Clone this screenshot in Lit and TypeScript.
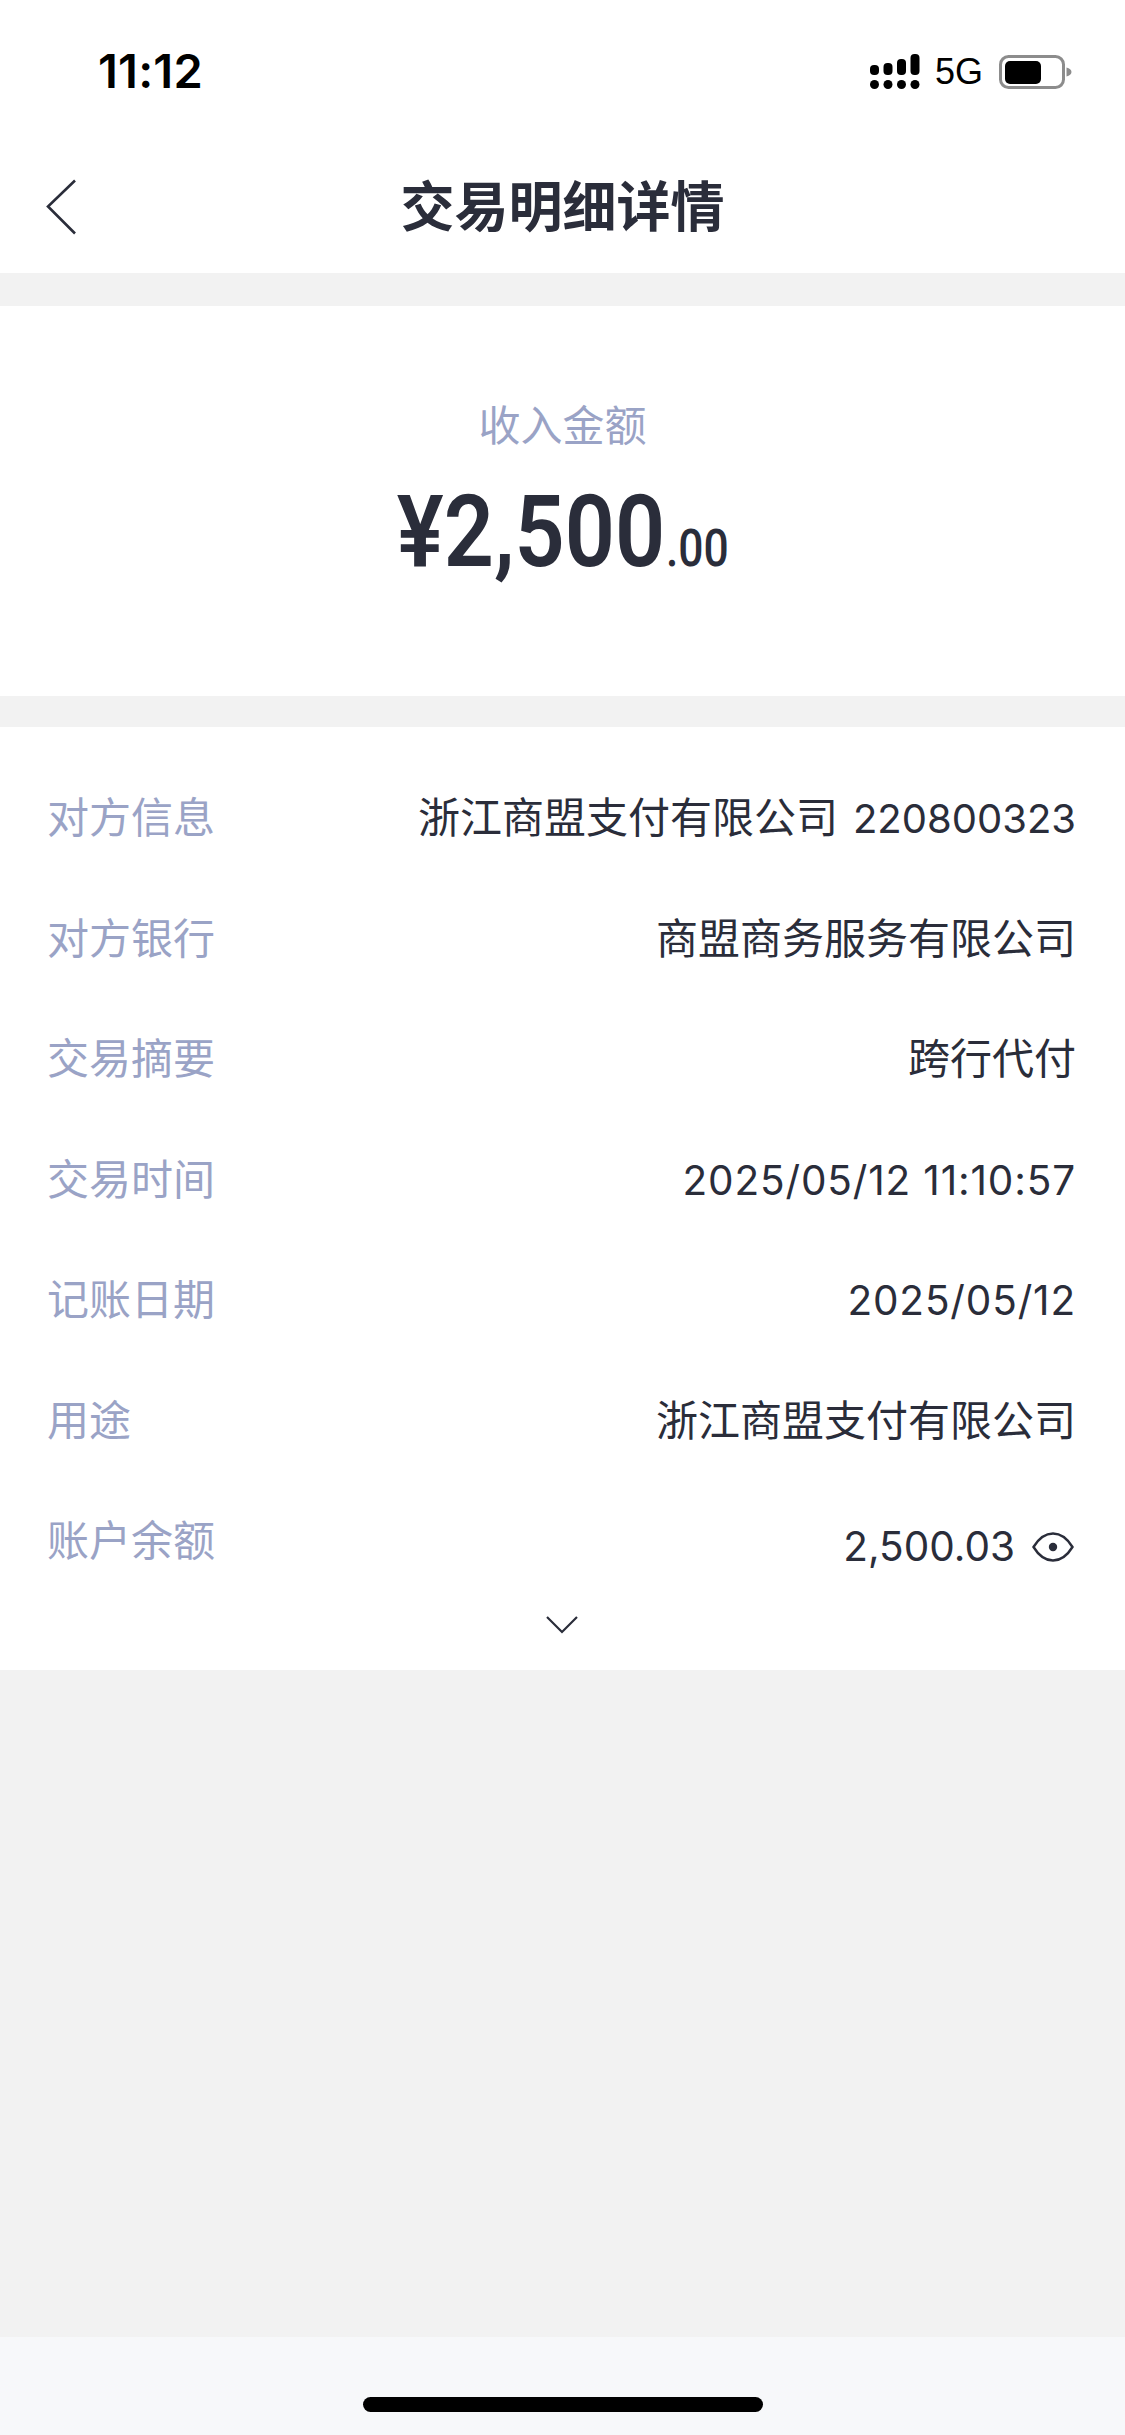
import { LitElement, html, css, svg } from "lit";
import { customElement } from "lit/decorators.js";

const ROWS: { label: string; value: unknown }[] = [
  { label: "对方信息", value: html`浙江商盟支付有限公司<span class="num gap">220800323</span>` },
  { label: "对方银行", value: "商盟商务服务有限公司" },
  { label: "交易摘要", value: "跨行代付" },
  { label: "交易时间", value: html`<span class="num date">2025/05/12 11:10:57</span>` },
  { label: "记账日期", value: html`<span class="num date">2025/05/12</span>` },
  { label: "用途", value: "浙江商盟支付有限公司" },
];

const signal = svg`<svg class="signal" width="50" height="36" viewBox="0 0 50 36" fill="#000">
  <rect x="0" y="11" width="9" height="10" rx="4"/><rect x="13.500" y="9" width="9" height="12" rx="4"/>
  <rect x="27" y="5" width="9" height="16" rx="4"/><rect x="40.500" y="0" width="9" height="21" rx="4"/>
  <circle cx="4.500" cy="30.500" r="4.500"/><circle cx="18" cy="30.500" r="4.500"/><circle cx="31.500" cy="30.500" r="4.500"/><circle cx="45" cy="30.500" r="4.500"/>
</svg>`;

const battery = svg`<svg class="battery" width="73" height="34" viewBox="0 0 73 34">
  <rect x="1.500" y="1.500" width="63" height="31" rx="8" fill="none" stroke="#8c8c8c" stroke-width="3"/>
  <rect x="6" y="6" width="36" height="23" rx="5" fill="#000"/>
  <path d="M67.500 12.500c3 .8 5 2.400 5 4.500s-2 3.700-5 4.500z" fill="#8c8c8c"/>
</svg>`;

@customElement("app-root")
export class AppRoot extends LitElement {
  static styles = css`
    :host {
      display: block;
      width: 1125px;
      height: 2435px;
      background: #f2f2f2;
      font-family: "Liberation Sans", "Noto Sans CJK SC", sans-serif;
      color: #2a2d3a;
      overflow: hidden;
    }
    .page { display: flex; flex-direction: column; height: 2435px; }
    .status {
      height: 130px; background: #fff; box-sizing: border-box;
      display: flex; justify-content: space-between; align-items: flex-start;
      padding: 48px 53px 0 98px;
    }
    .time { font: 600 47px/46px Inter, sans-serif; color: #000; letter-spacing: 0.2px; }
    .sys { display: flex; align-items: center; margin-top: 6px; }
    .sys .g5 { font: 400 36px/36px "Liberation Sans", sans-serif; color: #000; margin: 0 16px 0 15px; }
    .nav {
      height: 143px; background: #fff; position: relative;
      display: flex; align-items: center; justify-content: center;
    }
    .nav .back { position: absolute; left: 46px; top: 49px; }
    .title { font: 700 54px/70px "Noto Sans CJK SC", sans-serif; color: #2a2d3a; margin-top: 4px; }
    .hero {
      margin-top: 33px; height: 390px; background: #fff;
      display: flex; flex-direction: column; align-items: center; box-sizing: border-box; padding-top: 87px;
    }
    .hero .cap { font: 400 42px/60px "Noto Sans CJK SC", sans-serif; color: #9aa3c6; }
    .amount {
      margin-top: 21px; font-family: Roboto, sans-serif; color: #2a2d3a;
      display: flex; align-items: baseline; line-height: 116px;
      transform: scaleX(0.87);
    }
    .amount b { font-weight: 600; font-size: 101px; }
    .amount i { font-style: normal; font-weight: 500; font-size: 51px; margin-left: 1px; }
    .list {
      margin-top: 31px; height: 943px; background: #fff; box-sizing: border-box;
      padding: 28px 49px 0 47px; display: flex; flex-direction: column; align-items: stretch;
    }
    .row {
      height: 120.5px; flex: none; box-sizing: border-box;
      display: flex; justify-content: space-between; align-items: flex-start; padding-top: 30px;
    }
    .row .k { font: 400 42px/60px "Noto Sans CJK SC", sans-serif; color: #9aa3c6; }
    .row .v { font: 400 42px/60px "Noto Sans CJK SC", sans-serif; color: #2a2d3a; }
    .num { font-family: Inter, sans-serif; font-size: 40.5px; }
    .num.gap { margin-left: 15px; font-size: 40px; }
    .num.date { letter-spacing: 0.85px; }
    .v.bal { display: flex; align-items: center; margin-top: 9px; }
    .v.bal svg { margin-left: 17px; margin-right: 2px; }
    .more { display: flex; justify-content: center; margin-top: 16px; }
    .spacer { flex: 1; }
    .foot {
      height: 98px; background: #f7f8fa; display: flex; justify-content: center; box-sizing: border-box; padding-top: 60px;
    }
    .bar { width: 400px; height: 15px; border-radius: 8px; background: #000; }
  `;

  render() {
    return html`<div class="page">
      <div class="status">
        <div class="time">11:12</div>
        <div class="sys">${signal}<span class="g5">5G</span>${battery}</div>
      </div>
      <div class="nav">
        <svg class="back" width="32" height="56" viewBox="0 0 32 56" fill="none" stroke="#2a2d3a" stroke-width="2.6">
          <path d="M29 1.500 2 27.500l27 27"/>
        </svg>
        <div class="title">交易明细详情</div>
      </div>
      <div class="hero">
        <div class="cap">收入金额</div>
        <div class="amount"><b>¥2,500</b><i>.00</i></div>
      </div>
      <div class="list">
        ${ROWS.map((r) => html`<div class="row"><div class="k">${r.label}</div><div class="v">${r.value}</div></div>`)}
        <div class="row">
          <div class="k">账户余额</div>
          <div class="v bal"><span class="num">2,500.03</span>
            <svg width="42" height="30" viewBox="0 0 42 30" fill="none" stroke="#2a2d3a" stroke-width="2.4">
              <path d="M1.500 15C7 6 13.500 1.500 21 1.500S35 6 40.500 15C35 24 28.500 28.500 21 28.500S7 24 1.500 15z"/>
              <circle cx="21" cy="15" r="4.200" fill="#2a2d3a" stroke="none"/>
            </svg>
          </div>
        </div>
        <div class="more">
          <svg width="32" height="20" viewBox="0 0 32 20" fill="none" stroke="#2a2d3a" stroke-width="2.2"><path d="M1 2l15 15L31 2"/></svg>
        </div>
      </div>
      <div class="spacer"></div>
      <div class="foot"><div class="bar"></div></div>
    </div>`;
  }
}
